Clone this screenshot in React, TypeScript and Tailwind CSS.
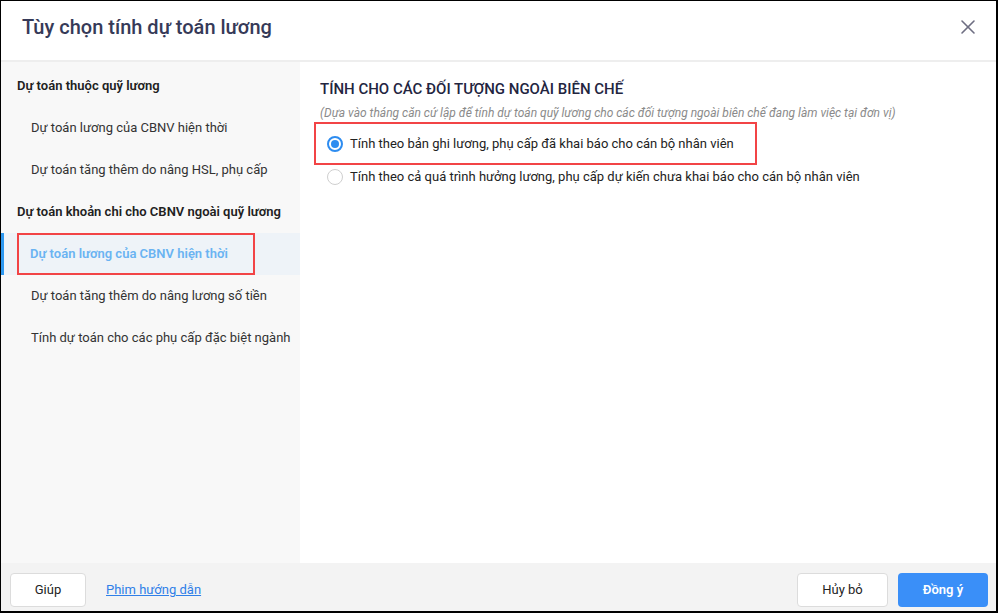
import { X } from "lucide-react";

const font = { fontFamily: "Roboto, 'Noto Sans', sans-serif" };

function SideGroup({ label }: { label: string }) {
  return (
    <div className="flex h-[42px] items-center pl-4 text-[13px] font-semibold text-[#212121]">
      {label}
    </div>
  );
}

function SideItem({ label, active }: { label: string; active?: boolean }) {
  if (active) {
    return (
      <div className="flex h-[42px] items-center border-l-[3px] border-[#2d98f0] bg-[#eef3f8] pl-[13px]">
        <div className="flex h-[42px] w-[238px] items-center border-2 border-[#f24446] pl-[11px] text-[13px] font-semibold text-[#6ab3f2]">
          {label}
        </div>
      </div>
    );
  }
  return (
    <div className="flex h-[42px] items-center pl-[30px] text-[13px] text-[#333]">
      {label}
    </div>
  );
}

function Radio({ checked }: { checked?: boolean }) {
  return checked ? (
    <span className="flex h-[16px] w-[16px] items-center justify-center rounded-full border-2 border-[#2d8cf0] bg-white">
      <span className="h-[8px] w-[8px] rounded-full bg-[#2d8cf0]" />
    </span>
  ) : (
    <span className="h-[16px] w-[16px] rounded-full border border-[#cfcfcf] bg-white" />
  );
}

export default function App() {
  return (
    <div
      style={font}
      className="flex h-[613px] w-[998px] flex-col border-l border-t border-r-2 border-b-2 border-black bg-white"
    >
      <div className="flex h-[61px] shrink-0 items-start justify-between border-b-2 border-[#eeeeee] pl-[21px] pr-[16px] pt-[12px]">
        <h1 className="text-[20px] font-medium leading-[28px] text-[#363a58]">
          Tùy chọn tính dự toán lương
        </h1>
        <X className="mt-[2px] h-[24px] w-[24px] text-[#6e6e82]" strokeWidth={1.6} />
      </div>

      <div className="flex min-h-0 flex-1">
        <div className="w-[299px] shrink-0 bg-[#f8f8f8] pt-[3px]">
          <SideGroup label="Dự toán thuộc quỹ lương" />
          <SideItem label="Dự toán lương của CBNV hiện thời" />
          <SideItem label="Dự toán tăng thêm do nâng HSL, phụ cấp" />
          <SideGroup label="Dự toán khoản chi cho CBNV ngoài quỹ lương" />
          <SideItem label="Dự toán lương của CBNV hiện thời" active />
          <SideItem label="Dự toán tăng thêm do nâng lương số tiền" />
          <SideItem label="Tính dự toán cho các phụ cấp đặc biệt ngành" />
        </div>

        <div className="flex-1 pl-[20px] pt-[17px]">
          <div className="text-[15px] font-medium uppercase leading-[20px] text-[#23253f]">
            Tính cho các đối tượng ngoài biên chế
          </div>
          <div className="mt-[6px] text-[12px] italic leading-[16px] text-[#8a8a8a]">
            (Dựa vào tháng căn cứ lập để tính dự toán quỹ lương cho các đối tượng ngoài biên chế đang làm việc tại đơn vị)
          </div>
          <div className="mt-[1px] -ml-[6px] flex h-[43px] w-[443px] items-center gap-[7px] border-2 border-[#f24446] pl-[11px] pt-[1px] text-[13px] text-[#222]">
            <Radio checked />
            <span>Tính theo bản ghi lương, phụ cấp đã khai báo cho cán bộ nhân viên</span>
          </div>
          <div className="flex h-[24px] items-center gap-[7px] pl-[7px] text-[13px] text-[#222]">
            <Radio />
            <span>Tính theo cả quá trình hưởng lương, phụ cấp dự kiến chưa khai báo cho cán bộ nhân viên</span>
          </div>
        </div>
      </div>

      <div className="flex h-[48px] shrink-0 items-start justify-between bg-[#f3f3f3] pl-[9px] pr-[8px] pt-[10px]">
        <div className="flex items-center gap-[20px]">
          <button className="h-[34px] w-[76px] rounded-[4px] border border-[#dcdcdc] bg-white text-[13px] text-[#222]">
            Giúp
          </button>
          <a className="text-[13px] text-[#2f7fe8] underline">Phim hướng dẫn</a>
        </div>
        <div className="flex items-center gap-[10px]">
          <button className="h-[34px] w-[91px] rounded-[4px] border border-[#dcdcdc] bg-white text-[13px] text-[#222]">
            Hủy bỏ
          </button>
          <button className="h-[34px] w-[90px] rounded-[4px] bg-[#3a8ff8] text-[13px] font-semibold text-white">
            Đồng ý
          </button>
        </div>
      </div>
    </div>
  );
}
